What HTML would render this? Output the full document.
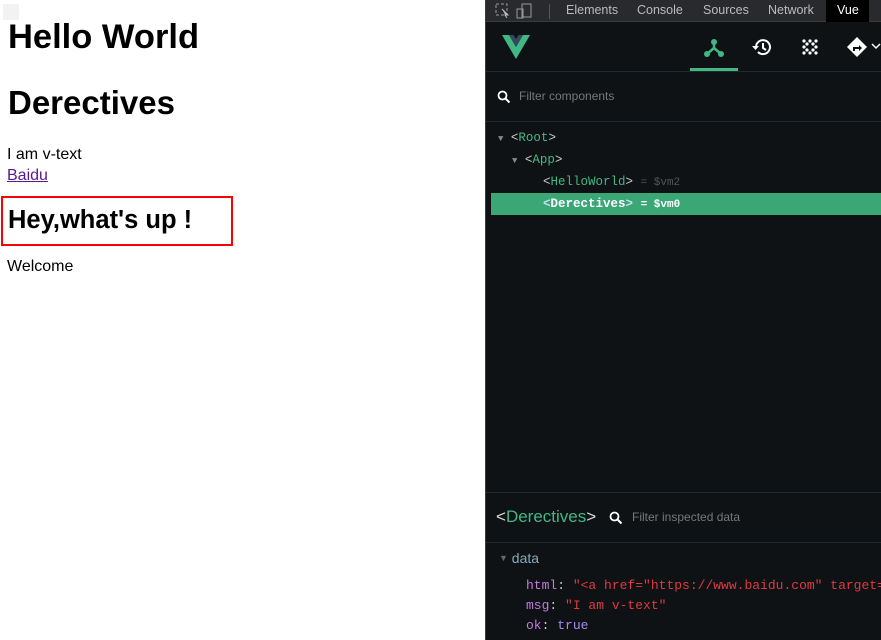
<!DOCTYPE html>
<html><head><style>
*{margin:0;padding:0;box-sizing:border-box}
body{width:881px;height:640px;overflow:hidden;background:#fff;font-family:"Liberation Sans",sans-serif;position:relative}
.a{position:absolute;white-space:nowrap}
.m{font-family:"Liberation Mono",monospace}
</style></head><body>
<div class="a" style="left:3px;top:4px;width:16px;height:16px;background:#f2f2f2"></div>
<div class="a" style="left:8px;top:18px;font-size:34.5px;font-weight:bold;color:#000">Hello World</div>
<div class="a" style="left:8px;top:84px;font-size:33px;font-weight:bold;color:#000">Derectives</div>
<div class="a" style="left:7px;top:146px;font-size:16px;color:#000">I am v-text</div>
<div class="a" style="left:7px;top:167px;font-size:16px;color:#551a8b;text-decoration:underline">Baidu</div>
<div class="a" style="left:1px;top:196px;width:232px;height:50px;border:2px solid #f00"></div>
<div class="a" style="left:8px;top:206px;font-size:25.5px;font-weight:bold;color:#000">Hey,what's up !</div>
<div class="a" style="left:7px;top:258px;font-size:16px;color:#000">Welcome</div>

<div class="a" style="left:485px;top:0;width:396px;height:640px;background:#0e1215;border-left:1px solid #3c3c3c"></div>
<div class="a" style="left:486px;top:0;width:395px;height:22px;background:#292a2d;border-bottom:1px solid #3c3c3c"></div>
<svg class="a" style="left:494px;top:2px" width="44" height="18"><rect x="2" y="2" width="11" height="11" fill="none" stroke="#999" stroke-dasharray="3 2"/><path d="M8 7l6 6-3 0 2 3" stroke="#bbb" fill="#bbb"/><rect x="28" y="2" width="9" height="13" fill="none" stroke="#999"/><rect x="23" y="7" width="6" height="9" fill="none" stroke="#999"/></svg>
<div class="a" style="left:549px;top:4px;width:1px;height:15px;background:#555"></div>
<div class="a" style="left:566px;top:3px;font-size:12.5px;color:#bbb">Elements</div>
<div class="a" style="left:637px;top:3px;font-size:12.5px;color:#bbb">Console</div>
<div class="a" style="left:703px;top:3px;font-size:12.5px;color:#bbb">Sources</div>
<div class="a" style="left:768px;top:3px;font-size:12.5px;color:#bbb">Network</div>
<div class="a" style="left:826px;top:0;width:43px;height:22px;background:#000"></div>
<div class="a" style="left:837px;top:3px;font-size:12.5px;color:#fff">Vue</div>
<svg class="a" style="left:501px;top:34px" width="30" height="26"><path d="M1 1h7l7 12 7-12h7L15 25z" fill="#41b883"/><path d="M8 1h4.5l2.5 4 2.5-4H22L15 13z" fill="#35495e"/></svg>
<svg class="a" style="left:703px;top:37px" width="22" height="22"><circle cx="11" cy="5" r="3" fill="#41b883"/><circle cx="4" cy="17" r="3" fill="#41b883"/><circle cx="18" cy="17" r="3" fill="#41b883"/><path d="M11 5v6l-7 6M11 11l7 6" stroke="#41b883" stroke-width="2.5" fill="none"/></svg>
<div class="a" style="left:690px;top:68px;width:48px;height:3px;background:#41b883"></div>
<svg class="a" style="left:751px;top:36px" width="22" height="22"><path d="M5 11a7 7 0 1 1 2 5" stroke="#fff" stroke-width="2" fill="none"/><path d="M1 10h7l-3.5 4z" fill="#fff"/><path d="M12 7v5l3 2" stroke="#fff" stroke-width="2" fill="none"/></svg>
<svg class="a" style="left:801px;top:38px" width="18" height="18" fill="#fff"><circle cx="3" cy="3" r="1.6"/><circle cx="9" cy="3" r="1.6"/><circle cx="15" cy="3" r="1.6"/><circle cx="6" cy="6" r="1.6"/><circle cx="12" cy="6" r="1.6"/><circle cx="3" cy="9" r="1.6"/><circle cx="15" cy="9" r="1.6"/><circle cx="6" cy="12" r="1.6"/><circle cx="12" cy="12" r="1.6"/><circle cx="3" cy="15" r="1.6"/><circle cx="9" cy="15" r="1.6"/><circle cx="15" cy="15" r="1.6"/></svg>
<svg class="a" style="left:846px;top:36px" width="35" height="22"><path d="M11 1l10 10-10 10L1 11z" fill="#fff"/><path d="M7 15v-4h6v-2l3 3-3 3v-2h-4v2z" fill="#0e1215"/><path d="M26 8l4 4 4-4" stroke="#fff" stroke-width="1.5" fill="none"/></svg>
<div class="a" style="left:486px;top:71px;width:395px;height:1px;background:#222a30"></div>
<svg class="a" style="left:497px;top:90px" width="14" height="14"><circle cx="5.5" cy="5.5" r="4" stroke="#fff" stroke-width="1.8" fill="none"/><path d="M8.5 8.5l4 4" stroke="#fff" stroke-width="2"/></svg>
<div class="a" style="left:519px;top:89px;font-size:12px;color:#777">Filter components</div>
<div class="a" style="left:486px;top:121px;width:395px;height:1px;background:#222a30"></div>
<div class="a m" style="left:498px;top:129px;font-size:12.5px;line-height:18px;color:#ccc"><span style="color:#888;font-size:9px">▼</span> &lt;<span style="color:#41b883">Root</span>&gt;</div>
<div class="a m" style="left:512px;top:151px;font-size:12.5px;line-height:18px;color:#ccc"><span style="color:#888;font-size:9px">▼</span> &lt;<span style="color:#41b883">App</span>&gt;</div>
<div class="a m" style="left:543px;top:173px;font-size:12.5px;line-height:18px;color:#ccc">&lt;<span style="color:#41b883">HelloWorld</span>&gt; <span style="color:#555;font-size:11px">= $vm2</span></div>
<div class="a" style="left:491px;top:193px;width:390px;height:22px;background:#3ba776"></div>
<div class="a m" style="left:543px;top:195px;font-size:12.5px;line-height:18px;color:#fff;font-weight:bold"><span style="color:#cde">&lt;</span>Derectives<span style="color:#cde">&gt;</span> <span style="font-size:11px">= $vm0</span></div>
<div class="a" style="left:486px;top:492px;width:395px;height:1px;background:#222a30"></div>
<div class="a" style="left:496px;top:507px;font-size:17px;color:#ddd">&lt;<span style="color:#41b883">Derectives</span>&gt;</div>
<svg class="a" style="left:609px;top:511px" width="14" height="14"><circle cx="5.5" cy="5.5" r="4" stroke="#fff" stroke-width="1.8" fill="none"/><path d="M8.5 8.5l4 4" stroke="#fff" stroke-width="2"/></svg>
<div class="a" style="left:632px;top:510px;font-size:12px;color:#777">Filter inspected data</div>
<div class="a" style="left:486px;top:542px;width:395px;height:1px;background:#222a30"></div>
<div class="a" style="left:499px;top:550px;font-size:14px;color:#8ab"><span style="color:#666;font-size:9px;vertical-align:2px">▼</span> data</div>
<div class="a m" style="left:526px;top:576px;font-size:13px;line-height:20px;color:#ccc"><span style="color:#c678dd">html</span>: <span style="color:#e0393e">"&lt;a href="https://www.baidu.com" target=_</span><br><span style="color:#c678dd">msg</span>: <span style="color:#e0393e">"I am v-text"</span><br><span style="color:#c678dd">ok</span>: <span style="color:#a58cf0">true</span></div>
</body></html>
